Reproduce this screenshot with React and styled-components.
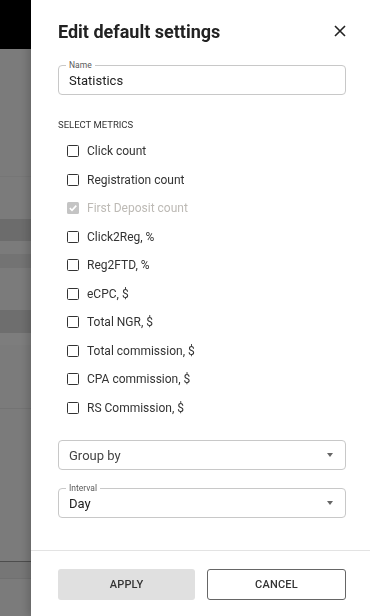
import React from 'react';
import styled, { createGlobalStyle } from 'styled-components';

const metrics = [
  { label: 'Click count' },
  { label: 'Registration count' },
  { label: 'First Deposit count', checked: true, disabled: true },
  { label: 'Click2Reg, %' },
  { label: 'Reg2FTD, %' },
  { label: 'eCPC, $' },
  { label: 'Total NGR, $' },
  { label: 'Total commission, $' },
  { label: 'CPA commission, $' },
  { label: 'RS Commission, $' },
];

// Rows of the page that sits behind the backdrop
const pageRows = [
  { h: 127, bg: '#f6f6f6' },
  { h: 1, bg: '#ececec' },
  { h: 42, bg: '#f6f6f6' },
  { h: 22, bg: '#d9d9d9' },
  { h: 13, bg: '#f6f6f6' },
  { h: 14, bg: '#e6e6e6' },
  { h: 42, bg: '#f6f6f6' },
  { h: 23, bg: '#dcdcdc' },
  { h: 12, bg: '#fafafa' },
  { h: 63, bg: '#f6f6f6' },
  { h: 1, bg: '#e6e6e6' },
  { h: 152, bg: '#f6f6f6' },
  { h: 1, bg: '#9a9a9a' },
  { h: 16, bg: '#ececec' },
  { h: 1, bg: '#e0e0e0' },
  { h: 40, bg: '#f6f6f6' },
];

const Checkbox = ({ checked, disabled }) => (
  <Box $checked={checked} $disabled={disabled}>
    {checked && (
      <svg width="10" height="10" viewBox="0 0 10 10">
        <path d="M1.8 5.2 L4 7.3 L8.3 2.6" fill="none" stroke="#fff" strokeWidth="1.6" />
      </svg>
    )}
  </Box>
);

const Field = ({ label, value, placeholder, select }) => (
  <Outlined>
    {label && <FieldLabel>{label}</FieldLabel>}
    <FieldValue $placeholder={!value}>{value || placeholder}</FieldValue>
    {select && <Arrow />}
  </Outlined>
);

const App = () => (
  <>
    <GlobalStyle />
    <Page>
      <PageHeader />
      {pageRows.map((r, i) => (
        <PageRow key={i} style={{ height: r.h, background: r.bg }} />
      ))}
    </Page>
    <Backdrop />
    <Drawer>
      <Body>
        <TitleBar>
          <Title>Edit default settings</Title>
          <CloseButton aria-label="close">
            <svg width="12" height="12" viewBox="0 0 12 12">
              <path d="M1 1 L11 11 M11 1 L1 11" stroke="#222" strokeWidth="1.6" />
            </svg>
          </CloseButton>
        </TitleBar>
        <Field label="Name" value="Statistics" />
        <SectionLabel>SELECT METRICS</SectionLabel>
        <MetricList>
          {metrics.map((m) => (
            <MetricRow key={m.label} $disabled={m.disabled}>
              <Checkbox checked={m.checked} disabled={m.disabled} />
              <span>{m.label}</span>
            </MetricRow>
          ))}
        </MetricList>
        <Selects>
          <Field placeholder="Group by" select />
          <Field label="Interval" value="Day" select />
        </Selects>
      </Body>
      <Footer>
        <Button $primary>APPLY</Button>
        <Button>CANCEL</Button>
      </Footer>
    </Drawer>
  </>
);

const GlobalStyle = createGlobalStyle`
  * { box-sizing: border-box; }
  html, body { margin: 0; padding: 0; height: 100%; overflow: hidden; }
  body { font-family: Roboto, "Liberation Sans", sans-serif; color: #333; }
`;

const Page = styled.div`
  display: flex;
  flex-direction: column;
  height: 100vh;
  background: #f6f6f6;
`;

const PageHeader = styled.div`
  height: 49px;
  background: #000;
  flex-shrink: 0;
`;

const PageRow = styled.div`
  flex-shrink: 0;
`;

const Backdrop = styled.div`
  position: fixed;
  inset: 0;
  background: rgba(0, 0, 0, 0.5);
`;

const Drawer = styled.aside`
  position: fixed;
  top: 0;
  right: 0;
  bottom: 0;
  width: 339px;
  background: #fff;
  display: flex;
  flex-direction: column;
  box-shadow: -3px 0 8px rgba(0, 0, 0, 0.18);
`;

const Body = styled.div`
  flex: 1;
  padding: 18px 24px 0 27px;
  display: flex;
  flex-direction: column;
`;

const TitleBar = styled.div`
  display: flex;
  align-items: center;
  justify-content: space-between;
  height: 26px;
  margin-bottom: 21px;
`;

const Title = styled.h2`
  margin: 0;
  font-size: 18px;
  font-weight: 700;
  color: #222;
`;

const CloseButton = styled.button`
  border: none;
  background: none;
  padding: 0;
  display: flex;
  cursor: pointer;
`;

const Outlined = styled.div`
  position: relative;
  height: 30px;
  border: 1px solid #c8c8c8;
  border-radius: 4px;
  display: flex;
  align-items: center;
  padding: 0 11px 0 10px;
`;

const FieldLabel = styled.span`
  position: absolute;
  top: -6px;
  left: 7px;
  padding: 0 3px;
  background: #fff;
  font-size: 8.5px;
  line-height: 10px;
  color: #5a5a5a;
`;

const FieldValue = styled.span`
  flex: 1;
  font-size: 13px;
  color: ${({ $placeholder }) => ($placeholder ? '#444' : '#222')};
`;

const Arrow = styled.span`
  width: 0;
  height: 0;
  border-left: 3.5px solid transparent;
  border-right: 3.5px solid transparent;
  border-top: 4px solid #666;
  margin-right: 1px;
`;

const SectionLabel = styled.div`
  margin-top: 24px;
  font-size: 9.5px;
  line-height: 12px;
  color: #333;
`;

const MetricList = styled.div`
  display: flex;
  flex-direction: column;
  margin-top: 6px;
  padding-left: 9px;
`;

const MetricRow = styled.label`
  display: flex;
  align-items: center;
  gap: 8px;
  height: 28.5px;
  font-size: 12px;
  color: ${({ $disabled }) => ($disabled ? '#bdbab5' : '#333')};
`;

const Box = styled.span`
  width: 12px;
  height: 12px;
  border-radius: 1.5px;
  display: flex;
  align-items: center;
  justify-content: center;
  border: ${({ $checked }) => ($checked ? 'none' : '1.5px solid #333')};
  background: ${({ $checked, $disabled }) =>
    $checked ? ($disabled ? '#c4c4c4' : '#333') : 'transparent'};
`;

const Selects = styled.div`
  display: flex;
  flex-direction: column;
  gap: 18px;
  margin-top: 18px;
`;

const Footer = styled.div`
  display: flex;
  gap: 12px;
  padding: 18px 24px 16px 27px;
  border-top: 1px solid #e3e3e3;
`;

const Button = styled.button`
  flex: 1;
  height: 31px;
  border-radius: 3px;
  font-family: Roboto, "Liberation Sans", sans-serif;
  font-size: 11px;
  font-weight: 500;
  color: #333;
  letter-spacing: 0.2px;
  background: ${({ $primary }) => ($primary ? '#e0e0e0' : '#fff')};
  border: ${({ $primary }) => ($primary ? 'none' : '1px solid #666')};
  cursor: pointer;
`;

export default App;
